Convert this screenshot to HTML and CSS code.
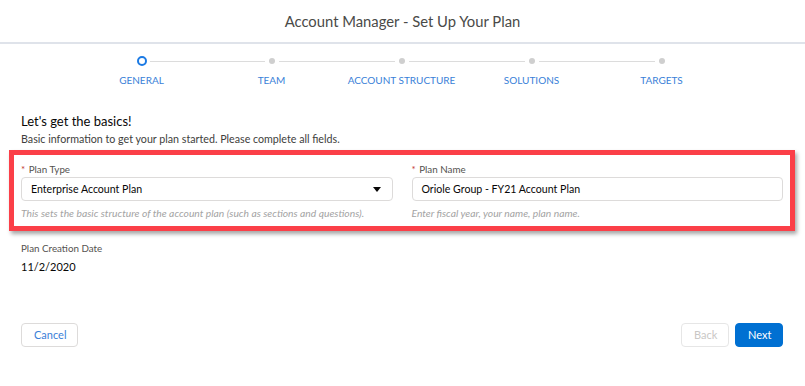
FILE: index.html
```html
<!DOCTYPE html>
<html lang="en">
<head>
<meta charset="utf-8">
<title>Account Manager - Set Up Your Plan</title>
<link rel="stylesheet" href="styles.css">
</head>
<body>
<div class="page">
  <header class="header">
    <h1 class="title">Account Manager - Set Up Your Plan</h1>
  </header>

  <ol class="stepper">
    <li class="step step-active">
      <div class="track"><span class="line line-left"></span><span class="dot"></span><span class="line line-right"></span></div>
      <span class="step-label">GENERAL</span>
    </li>
    <li class="step">
      <div class="track"><span class="line line-left"></span><span class="dot"></span><span class="line line-right"></span></div>
      <span class="step-label">TEAM</span>
    </li>
    <li class="step">
      <div class="track"><span class="line line-left"></span><span class="dot"></span><span class="line line-right"></span></div>
      <span class="step-label">ACCOUNT STRUCTURE</span>
    </li>
    <li class="step">
      <div class="track"><span class="line line-left"></span><span class="dot"></span><span class="line line-right"></span></div>
      <span class="step-label">SOLUTIONS</span>
    </li>
    <li class="step">
      <div class="track"><span class="line line-left"></span><span class="dot"></span><span class="line line-right"></span></div>
      <span class="step-label">TARGETS</span>
    </li>
  </ol>

  <main class="content">
    <h2 class="section-title">Let's get the basics!</h2>
    <p class="section-desc">Basic information to get your plan started. Please complete all fields.</p>

    <div class="highlight">
      <div class="field">
        <label class="field-label"><abbr class="req">*</abbr> Plan Type</label>
        <div class="control select">
          <span class="control-text">Enterprise Account Plan</span>
          <svg class="caret" width="8" height="5" viewBox="0 0 8 5"><path d="M0 0 L8 0 L4 5 Z" fill="#080707"/></svg>
        </div>
        <p class="help">This sets the basic structure of the account plan (such as sections and questions).</p>
      </div>
      <div class="field">
        <label class="field-label"><abbr class="req">*</abbr> Plan Name</label>
        <div class="control">
          <span class="control-text">Oriole Group - FY21 Account Plan</span>
        </div>
        <p class="help">Enter fiscal year, your name, plan name.</p>
      </div>
    </div>

    <div class="readonly">
      <span class="field-label">Plan Creation Date</span>
      <span class="readonly-value">11/2/2020</span>
    </div>
  </main>

  <footer class="footer">
    <button class="btn btn-neutral">Cancel</button>
    <div class="footer-right">
      <button class="btn btn-disabled">Back</button>
      <button class="btn btn-brand">Next</button>
    </div>
  </footer>
</div>
</body>
</html>
```

FILE: styles.css
```css
* { box-sizing: border-box; }

html, body {
  margin: 0;
  padding: 0;
  background: #ffffff;
}

body {
  font-family: Lato, "Open Sans", "Liberation Sans", sans-serif;
  color: #080707;
  width: 805px;
  height: 386px;
  overflow: hidden;
}

.page {
  display: flex;
  flex-direction: column;
}

.header {
  height: 44px;
  border-bottom: 2px solid #dfe3ea;
  display: flex;
  align-items: center;
  justify-content: center;
}

.title {
  margin: 0;
  font-size: 14.8px;
  font-weight: 400;
  color: #4a4a48;
  line-height: 20px;
}

.stepper {
  list-style: none;
  margin: 0 auto;
  padding: 12px 0 0;
  display: grid;
  grid-template-columns: repeat(5, 130px);
  justify-content: center;
  transform: translateX(-1px);
}

.step {
  display: flex;
  flex-direction: column;
  align-items: center;
}

.track {
  width: 100%;
  height: 10px;
  display: flex;
  align-items: center;
}

.line {
  flex: 1;
  height: 1px;
  background: #dcdcdc;
}

.line-left { margin-right: 4px; }
.line-right { margin-left: 4px; }

.step:first-child .line-left,
.step:last-child .line-right {
  visibility: hidden;
}

.dot {
  width: 6px;
  height: 6px;
  border-radius: 50%;
  background: #cfcfcf;
  flex: none;
}

.step-active .dot {
  width: 10px;
  height: 10px;
  background: #ffffff;
  border: 2.5px solid #1b7ae4;
}

.step-active .line-right { margin-left: 3px; }

.step-label {
  margin-top: 8px;
  font-size: 10px;
  line-height: 12px;
  color: #3a7fd8;
  white-space: nowrap;
}

.content {
  padding: 26px 22px 0 21px;
  display: flex;
  flex-direction: column;
}

.section-title {
  margin: 0;
  font-size: 13px;
  font-weight: 400;
  line-height: 18px;
  color: #080707;
}

.section-desc {
  margin: 2px 0 0;
  font-size: 10.7px;
  line-height: 14px;
  color: #3e3e3c;
}

.highlight {
  margin: 4px -12px 0;
  padding: 8px 7px 6px;
  border: 5px solid #fb3f48;
  box-shadow: 2px 3px 4px rgba(0, 0, 0, 0.35);
  display: grid;
  grid-template-columns: 1fr 1fr;
  column-gap: 19px;
}

.field {
  display: flex;
  flex-direction: column;
}

.field-label {
  font-size: 9.8px;
  line-height: 12px;
  color: #54524f;
}

.req {
  color: #c23934;
  text-decoration: none;
  margin-right: 1px;
}

.control {
  margin-top: 2px;
  height: 24px;
  border: 1px solid #dddbda;
  border-radius: 4px;
  display: flex;
  align-items: center;
  padding: 0 11px 0 9px;
  background: #fff;
}

.select {
  justify-content: space-between;
}

.control-text {
  font-size: 10.6px;
  color: #080707;
}

.caret { flex: none; }

.help {
  margin: 5px 0 0;
  font-size: 10.3px;
  line-height: 14px;
  font-style: italic;
  color: #a3a3a3;
}

.readonly {
  margin-top: 11px;
  display: flex;
  flex-direction: column;
}

.readonly-value {
  margin-top: 5px;
  font-size: 11px;
  line-height: 16px;
  color: #080707;
}

.footer {
  margin-top: 48px;
  padding: 0 22px 0 21px;
  display: flex;
  justify-content: space-between;
  align-items: center;
}

.footer-right {
  display: flex;
  gap: 6px;
}

.btn {
  height: 24px;
  padding: 0 12px;
  border-radius: 4px;
  font-family: inherit;
  font-size: 11px;
  line-height: 22px;
  border: 1px solid #dddbda;
  background: #fff;
  cursor: pointer;
}

.btn-neutral {
  width: 57px;
  color: #3a7fd8;
}

.btn-disabled {
  width: 48px;
  color: #c9c7c5;
  border-color: #e6e6e6;
}

.btn-brand {
  width: 48px;
  color: #fff;
  background: #0070d2;
  border-color: #0070d2;
}
```
